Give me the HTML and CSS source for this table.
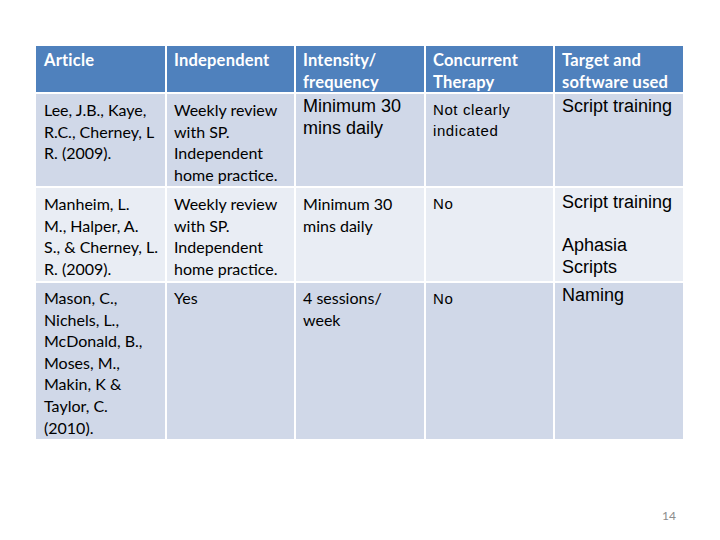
FILE: index.html
```html
<!DOCTYPE html>
<html>
<head>
<meta charset="utf-8">
<link rel="stylesheet" href="styles.css">
</head>
<body>
<div class="slide">
  <div class="grid">
    <div class="cell head">Article</div>
    <div class="cell head">Independent</div>
    <div class="cell head">Intensity/<br>frequency</div>
    <div class="cell head">Concurrent<br>Therapy</div>
    <div class="cell head">Target and<br>software used</div>

    <div class="cell r1 first">Lee, J.B., Kaye,<br>R.C., Cherney, L<br>R. (2009).</div>
    <div class="cell r1 first">Weekly review<br>with SP.<br>Independent<br>home practice.</div>
    <div class="cell r1 first arial">Minimum 30<br>mins daily</div>
    <div class="cell r1 first arial-sm">Not clearly<br>indicated</div>
    <div class="cell r1 first arial">Script training</div>

    <div class="cell r2">Manheim, L.<br>M., Halper, A.<br>S., &amp; Cherney, L.<br>R. (2009).</div>
    <div class="cell r2">Weekly review<br>with SP.<br>Independent<br>home practice.</div>
    <div class="cell r2">Minimum 30<br>mins daily</div>
    <div class="cell r2 arial-sm">No</div>
    <div class="cell r2 arial">Script training<br><br>Aphasia<br>Scripts</div>

    <div class="cell r1 last">Mason, C.,<br>Nichels, L.,<br>McDonald, B.,<br>Moses, M.,<br>Makin, K &amp;<br>Taylor, C.<br>(2010).</div>
    <div class="cell r1 last">Yes</div>
    <div class="cell r1 last">4 sessions/<br>week</div>
    <div class="cell r1 last arial-sm">No</div>
    <div class="cell r1 last arial">Naming</div>
  </div>
  <div class="pagenum">14</div>
</div>
</body>
</html>
```

FILE: styles.css
```css
html, body {
  margin: 0;
  padding: 0;
  background: #ffffff;
}
.slide {
  width: 720px;
  height: 540px;
  padding: 46px 0 0 36px;
  box-sizing: border-box;
  display: flex;
  flex-direction: column;
  font-family: Lato, "Open Sans", sans-serif;
}
.grid {
  display: grid;
  grid-template-columns: 129px 127px 128px 127px 128px;
  grid-template-rows: 46px 92px 93px 156px;
  gap: 2px;
  width: 647px;
}
.cell {
  font-size: 16px;
  line-height: 21.6px;
  color: #000000;
  padding: 5px 3px 0 7px;
  box-sizing: border-box;
}
.cell:nth-child(5n+1) { padding-left: 8px; }
.head {
  background: #4f81bd;
  color: #ffffff;
  font-weight: bold;
  font-size: 16.5px;
  padding-top: 3px;
  line-height: 22px;
  letter-spacing: 0.2px;
}
.r1 { background: #d0d8e8; }
.r2 { background: #e9edf4; }
.first { padding-top: 5px; }
.last { padding-top: 4px; }
.arial {
  font-family: "Liberation Sans", Arial, sans-serif;
  font-size: 18px;
  line-height: 21.6px;
  padding-top: 4px;
  letter-spacing: 0;
}
.arial.first { padding-top: 2px; }
.arial.last { padding-top: 2px; }
.arial-sm {
  font-family: "Liberation Sans", Arial, sans-serif;
  font-size: 15px;
  letter-spacing: 0.6px;
  line-height: 21px;
  padding-top: 5px;
}
.arial-sm.first { padding-top: 5px; }
.arial-sm.last { padding-top: 5px; }
.pagenum {
  align-self: flex-end;
  margin: 69px 44px 0 0;
  font-family: Lato, sans-serif;
  font-size: 12px;
  color: #8c8c8c;
}
```
